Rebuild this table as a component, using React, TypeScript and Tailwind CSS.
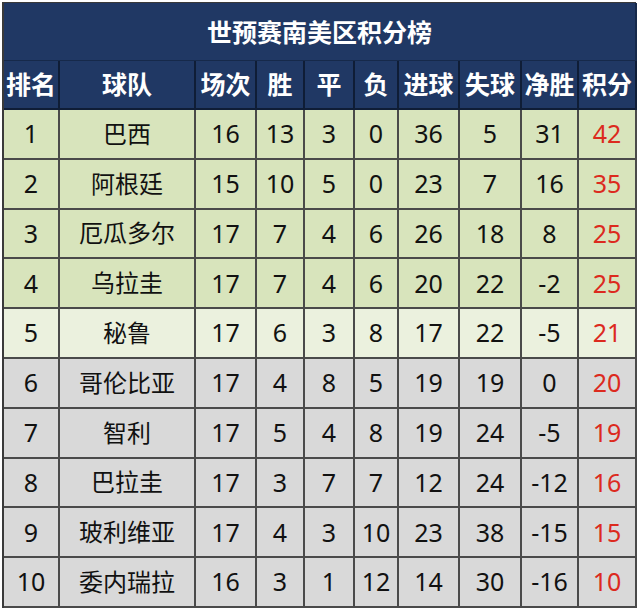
const rows = [
  { rank: 1, team: "巴西", p: 16, w: 13, d: 3, l: 0, gf: 36, ga: 5, gd: 31, pts: 42 },
  { rank: 2, team: "阿根廷", p: 15, w: 10, d: 5, l: 0, gf: 23, ga: 7, gd: 16, pts: 35 },
  { rank: 3, team: "厄瓜多尔", p: 17, w: 7, d: 4, l: 6, gf: 26, ga: 18, gd: 8, pts: 25 },
  { rank: 4, team: "乌拉圭", p: 17, w: 7, d: 4, l: 6, gf: 20, ga: 22, gd: -2, pts: 25 },
  { rank: 5, team: "秘鲁", p: 17, w: 6, d: 3, l: 8, gf: 17, ga: 22, gd: -5, pts: 21 },
  { rank: 6, team: "哥伦比亚", p: 17, w: 4, d: 8, l: 5, gf: 19, ga: 19, gd: 0, pts: 20 },
  { rank: 7, team: "智利", p: 17, w: 5, d: 4, l: 8, gf: 19, ga: 24, gd: -5, pts: 19 },
  { rank: 8, team: "巴拉圭", p: 17, w: 3, d: 7, l: 7, gf: 12, ga: 24, gd: -12, pts: 16 },
  { rank: 9, team: "玻利维亚", p: 17, w: 4, d: 3, l: 10, gf: 23, ga: 38, gd: -15, pts: 15 },
  { rank: 10, team: "委内瑞拉", p: 16, w: 3, d: 1, l: 12, gf: 14, ga: 30, gd: -16, pts: 10 },
];

const headers = ["排名", "球队", "场次", "胜", "平", "负", "进球", "失球", "净胜", "积分"];

function rowBg(rank: number) {
  if (rank <= 4) return "bg-[#d8e4bc]";
  if (rank === 5) return "bg-[#ebf1de]";
  return "bg-[#d9d9d9]";
}

export default function App() {
  return (
    <div
      className="w-[640px] h-[609px] bg-white pt-[2px] pl-[2px]"
      style={{ fontFamily: '"Noto Sans", "Noto Sans CJK SC", sans-serif' }}
    >
      <div className="grid w-[634px] grid-cols-[56px_136px_61px_48px_50px_44px_61px_62px_57px_58px] border-l-2 border-t border-[#3a3a3a]">
        <div className="col-span-10 flex h-[58px] items-center justify-center border-r-2 border-b border-[#16294a] bg-[#203864] pt-[2px] text-[25px] font-bold text-white">
          世预赛南美区积分榜
        </div>
        {headers.map((h) => (
          <div
            key={h}
            className="flex h-[49px] items-center justify-center border-r-2 border-b-2 border-[#0f1d36] bg-[#203864] text-[25px] font-bold text-white"
          >
            {h}
          </div>
        ))}
        {rows.map((r) => {
          const cells = [r.rank, r.team, r.p, r.w, r.d, r.l, r.gf, r.ga, r.gd, r.pts];
          return cells.map((c, i) => (
            <div
              key={`${r.rank}-${i}`}
              className={`flex h-[49.8px] items-center justify-center border-r-2 border-b-2 border-[#4a4a4a] ${
                i === 1 ? "text-[24px]" : "text-[25px]"
              } ${rowBg(r.rank)} ${i === 9 ? "text-[#dc2a1e]" : "text-[#111111]"}`}
            >
              {c}
            </div>
          ));
        })}
      </div>
    </div>
  );
}
